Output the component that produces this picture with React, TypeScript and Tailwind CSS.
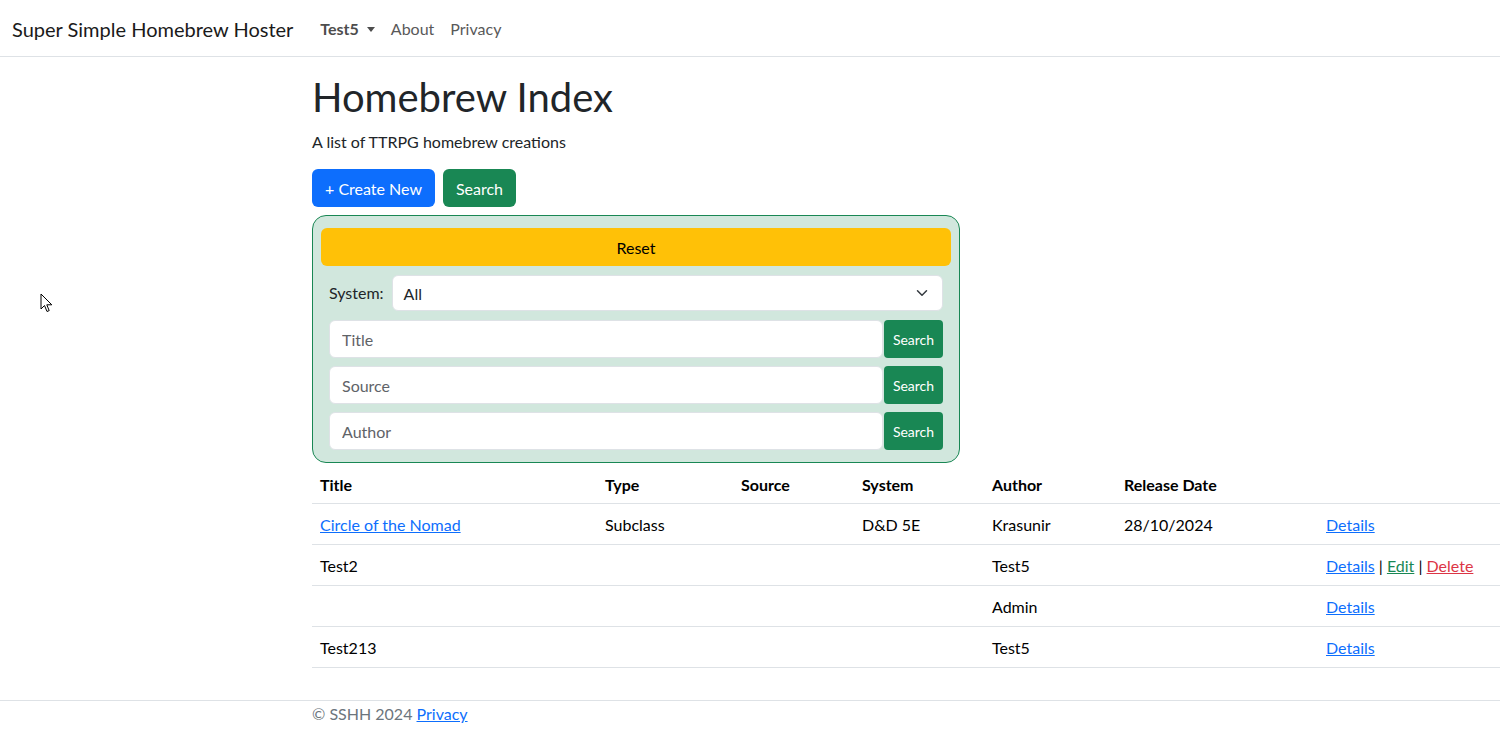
import React from "react";

const rows = [
  { title: "Circle of the Nomad", link: true, type: "Subclass", source: "", system: "D&D 5E", author: "Krasunir", date: "28/10/2024", edit: false },
  { title: "Test2", link: false, type: "", source: "", system: "", author: "Test5", date: "", edit: true },
  { title: "", link: false, type: "", source: "", system: "", author: "Admin", date: "", edit: false },
  { title: "Test213", link: false, type: "", source: "", system: "", author: "Test5", date: "", edit: false },
];

function SearchRow({ placeholder }: { placeholder: string }) {
  return (
    <div className="flex h-[38px] items-stretch gap-[1px]">
      <input
        placeholder={placeholder}
        className="min-w-0 flex-1 rounded-[6px] border border-[#dee2e6] bg-white px-[12px] pt-[2px] text-[16px] text-[#212529] outline-none placeholder:text-[#5f6368]"
      />
      <button className="w-[59px] rounded-[4px] bg-[#198754] pt-[1px] text-[14px] text-white">Search</button>
    </div>
  );
}

export default function App() {
  return (
    <div className="relative min-h-[745px] bg-white font-['Lato',sans-serif] text-[16px] leading-[24px] text-[#212529]">
      {/* Navbar */}
      <nav className="flex h-[57px] items-center border-b border-[#dee2e6] pl-[12px] pt-[2px]">
        <span className="mr-[19px] text-[20px] leading-[30px] text-[#1a1a1a]">Super Simple Homebrew Hoster</span>
        <div className="flex items-center">
          <span className="flex items-center pl-[8px] pr-[8px] font-bold text-[#4d4d4d]">
            Test5
            <span className="ml-[8px] inline-block h-0 w-0 border-x-[4px] border-t-[5px] border-x-transparent border-t-[#4d4d4d]" />
          </span>
          <span className="px-[8px] text-[#595959]">About</span>
          <span className="px-[8px] text-[#595959]">Privacy</span>
        </div>
      </nav>

      {/* Main */}
      <main className="pl-[312px] pt-[16px]">
        <h1 className="mb-[9px] text-[40px] leading-[48px] text-[#212529]">Homebrew Index</h1>
        <p className="mb-[15px]">A list of TTRPG homebrew creations</p>
        <div className="flex gap-[8px]">
          <button className="h-[38px] rounded-[6px] bg-[#0d6efd] px-[13px] pt-[2px] text-white">+ Create New</button>
          <button className="h-[38px] rounded-[6px] bg-[#198754] px-[13px] pt-[2px] text-white">Search</button>
        </div>

        <div className="mt-[8px] w-[648px] rounded-[14px] border border-[#198754] bg-[#d1e7dd] px-[8px] pb-[12px] pt-[12px]">
          <button className="h-[38px] w-full rounded-[6px] bg-[#ffc107] pt-[2px] text-[#000]">Reset</button>
          <div className="mt-[8px] flex flex-col gap-[8px] px-[8px]">
            <div className="flex h-[38px] items-center gap-[8px]">
              <span>System:</span>
              <div className="relative flex h-[36px] flex-1 items-center rounded-[6px] border border-[#dee2e6] bg-white pl-[11px] pt-[1px]">
                <span className="text-[#212529]">All</span>
                <svg className="absolute right-[12px] top-1/2 -translate-y-1/2" width="16" height="12" viewBox="0 0 16 16">
                  <path d="m2 5 6 6 6-6" fill="none" stroke="#343a40" strokeWidth="2" strokeLinecap="round" strokeLinejoin="round" />
                </svg>
              </div>
            </div>
            <SearchRow placeholder="Title" />
            <SearchRow placeholder="Source" />
            <SearchRow placeholder="Author" />
          </div>
        </div>

        <table className="w-full table-fixed border-collapse text-[#000]">
          <thead>
            <tr className="h-[40px] border-b border-[#dee2e6]">
              <th className="w-[285px] px-[8px] pt-[10px] pb-[5px] text-left font-bold">Title</th>
              <th className="w-[136px] px-[8px] pt-[10px] pb-[5px] text-left font-bold">Type</th>
              <th className="w-[121px] px-[8px] pt-[10px] pb-[5px] text-left font-bold">Source</th>
              <th className="w-[130px] px-[8px] pt-[10px] pb-[5px] text-left font-bold">System</th>
              <th className="w-[132px] px-[8px] pt-[10px] pb-[5px] text-left font-bold">Author</th>
              <th className="w-[202px] px-[8px] pt-[10px] pb-[5px] text-left font-bold">Release Date</th>
              <th className="px-[8px]"></th>
            </tr>
          </thead>
          <tbody>
            {rows.map((r, i) => (
              <tr key={i} className="h-[41px] border-b border-[#dee2e6]">
                <td className="px-[8px] pt-[9px] pb-[7px]">
                  {r.link ? <span className="text-[#0d6efd] underline">{r.title}</span> : r.title}
                </td>
                <td className="px-[8px] pt-[9px] pb-[7px]">{r.type}</td>
                <td className="px-[8px] pt-[9px] pb-[7px]">{r.source}</td>
                <td className="px-[8px] pt-[9px] pb-[7px]">{r.system}</td>
                <td className="px-[8px] pt-[9px] pb-[7px]">{r.author}</td>
                <td className="px-[8px] pt-[9px] pb-[7px]">{r.date}</td>
                <td className="whitespace-nowrap px-[8px] pt-[9px] pb-[7px]">
                  <span className="text-[#0d6efd] underline">Details</span>
                  {r.edit && (
                    <>
                      {" | "}
                      <span className="text-[#198754] underline">Edit</span>
                      {" | "}
                      <span className="text-[#dc3545] underline">Delete</span>
                    </>
                  )}
                </td>
              </tr>
            ))}
          </tbody>
        </table>
      </main>

      <footer className="mt-[32px] h-[45px] border-t border-[#dee2e6] pl-[312px] pt-[1px] text-[#6c757d]">
        © SSHH 2024 <span className="text-[#0d6efd] underline">Privacy</span>
      </footer>

      {/* mouse cursor */}
      <svg className="absolute left-[40px] top-[293px]" width="14" height="21" viewBox="0 0 14 21">
        <path d="M1 1 L1 16 L4.5 12.5 L7 18.5 L9.2 17.6 L6.8 11.8 L11.8 11.8 Z" fill="#fff" stroke="#000" strokeWidth="1" strokeLinejoin="miter" />
      </svg>
    </div>
  );
}
